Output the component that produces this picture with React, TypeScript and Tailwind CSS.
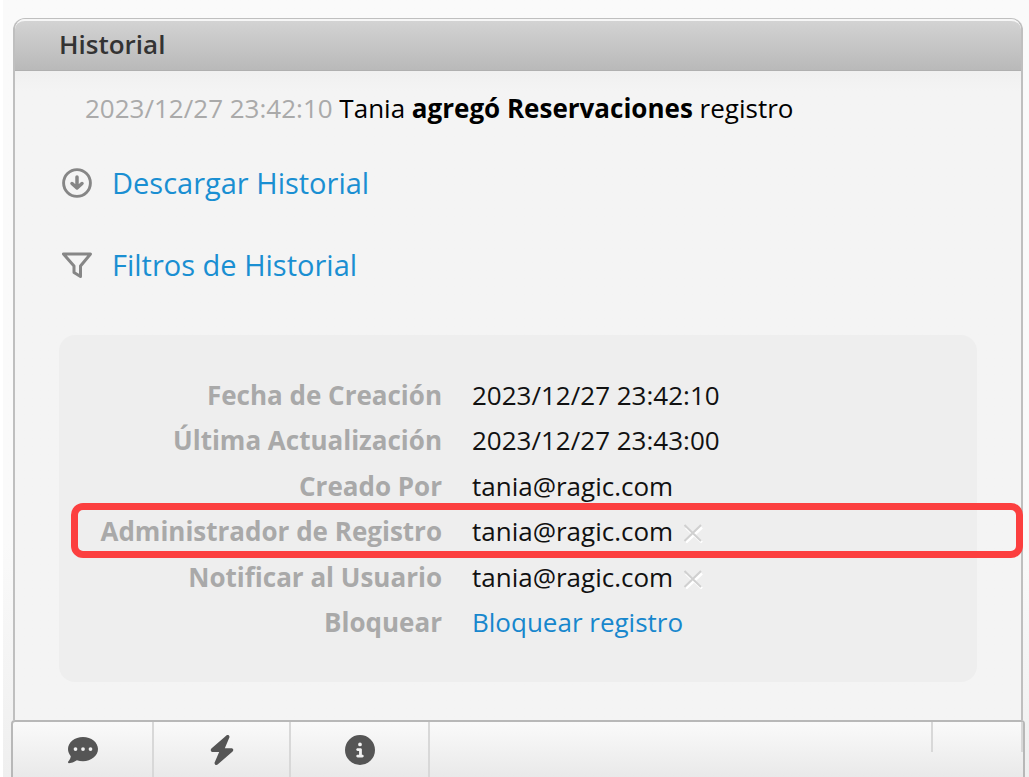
import React from 'react';
import { FaBolt, FaCircleInfo, FaCommentDots } from 'react-icons/fa6';

interface RecordField {
  label: string;
  value: string;
  removable?: boolean;
  link?: boolean;
  highlighted?: boolean;
}

const fields: RecordField[] = [
  { label: 'Fecha de Creación', value: '2023/12/27 23:42:10' },
  { label: 'Última Actualización', value: '2023/12/27 23:43:00' },
  { label: 'Creado Por', value: 'tania@ragic.com' },
  { label: 'Administrador de Registro', value: 'tania@ragic.com', removable: true, highlighted: true },
  { label: 'Notificar al Usuario', value: 'tania@ragic.com', removable: true },
  { label: 'Bloquear', value: 'Bloquear registro', link: true },
];

const DownloadIcon = () => (
  <svg viewBox="0 0 30 30" className="size-[30px]" fill="none" stroke="#868686" strokeWidth="2.9" strokeLinecap="round" strokeLinejoin="round" aria-hidden="true">
    <circle cx="15" cy="15" r="13.4" />
    <path d="M15 9v11M10 15.5l5 4.500 5-4.500" strokeWidth="3.500" />
  </svg>
);

const FilterIcon = () => (
  <svg viewBox="0 0 30 30" className="size-[30px]" fill="none" stroke="#868686" strokeWidth="3" strokeLinejoin="round" aria-hidden="true">
    <path d="M1.500 4h27L18.500 16v10.500l-6.500-4V16z" />
  </svg>
);

const RemoveIcon = () => (
  <svg viewBox="0 0 20 20" className="size-5" fill="none" aria-hidden="true">
    <path d="M3 4.500 19 19.500M19 4.500 3 19.500" stroke="#fff" strokeWidth="2.500" />
    <path d="M1.500 2 18 18M18 2 1.500 18" stroke="#d0d0d0" strokeWidth="2" />
  </svg>
);

const FieldTable: React.FC = () => (
  <div className="mt-[50px] rounded-2xl bg-[#eeeeee] pt-[37px] pb-[37px]">
    <table className="h-[273px] w-full border-collapse">
      <tbody>
        {fields.map((field) => (
          <tr key={field.label} className="relative">
            <th scope="row" className="w-[383px] p-0 text-right font-bold whitespace-nowrap text-[#a9a9a9]">
              {field.label}
            </th>
            <td className="py-0 pr-0 pl-[30px]">
              <div className="flex items-center gap-2.5">
                {field.link ? (
                  <a href="#bloquear" className="text-[#1787cd]">{field.value}</a>
                ) : (
                  <span>{field.value}</span>
                )}
                {field.removable && (
                  <button type="button" aria-label="Quitar" className="mt-1 cursor-pointer">
                    <RemoveIcon />
                  </button>
                )}
              </div>
              {field.highlighted && (
                <div className="pointer-events-none absolute -top-1.5 -right-[46px] -bottom-1 left-3 rounded-xl border-[7px] border-[#fc3f3f]" />
              )}
            </td>
          </tr>
        ))}
      </tbody>
    </table>
  </div>
);

const BottomBar: React.FC = () => (
  <footer className="-mr-0.5 -ml-0.5 flex h-[58px] rounded-t border-x-2 border-t-2 border-[#b8b8b8] bg-linear-to-b from-[#fafafa] to-[#e9e9e9] text-[#555555]">
    <button type="button" aria-label="Comentarios" className="flex w-[141px] cursor-pointer items-center justify-center border-r-2 border-[#d8d8d8]">
      <FaCommentDots className="size-[30px]" />
    </button>
    <button type="button" aria-label="Acciones" className="flex w-[137px] cursor-pointer items-center justify-center border-r-2 border-[#d8d8d8]">
      <FaBolt className="size-[30px]" />
    </button>
    <button type="button" aria-label="Información" className="flex w-[139px] cursor-pointer items-center justify-center border-r-2 border-[#d8d8d8]">
      <FaCircleInfo className="size-[30px]" />
    </button>
    <div className="ml-auto h-[30px] w-[92px] border-x-2 border-[#d8d8d8]" />
  </footer>
);

const App: React.FC = () => {
  return (
    <div className="h-screen overflow-hidden border-l-[3px] border-white bg-linear-to-b from-[#fafafa] from-70% to-[#efefef] pt-[18px] pr-1.5 pl-2.5 font-['Open_Sans',sans-serif] text-[26px] leading-9 text-[#111111]">
      <section className="rounded-t-xl border-x-2 border-t border-[#bfbfbf] bg-[#f4f4f4]">
        <h1 className="h-[52px] rounded-t-[10px] border-t-2 border-b border-t-[#f6f6f6] border-b-[#b0b0b0] bg-linear-to-b from-[#d3d3d3] to-[#b9b9b9] pt-[5px] pl-11 text-[26px] leading-9 font-semibold text-[#333333]">
          Historial
        </h1>
        <div className="bg-linear-to-b from-[#f0f0f0] to-[#f4f4f4] to-[20px] pt-[19px] pr-11 pb-[38px] pl-11">
          <p className="pl-[26px] text-black">
            <span className="text-[#aaaaaa]">2023/12/27 23:42:10</span> Tania <b>agregó Reservaciones</b> registro
          </p>
          <div className="mt-[37px] flex flex-col gap-[42px] pl-[3px] text-[29px] leading-10">
            <a href="#descargar" className="flex items-center gap-5 text-[#1a8fd2]">
              <DownloadIcon />
              Descargar Historial
            </a>
            <a href="#filtros" className="flex items-center gap-5 text-[#1a8fd2]">
              <FilterIcon />
              Filtros de Historial
            </a>
          </div>
          <FieldTable />
        </div>
      </section>
      <BottomBar />
    </div>
  );
};

export default App;
